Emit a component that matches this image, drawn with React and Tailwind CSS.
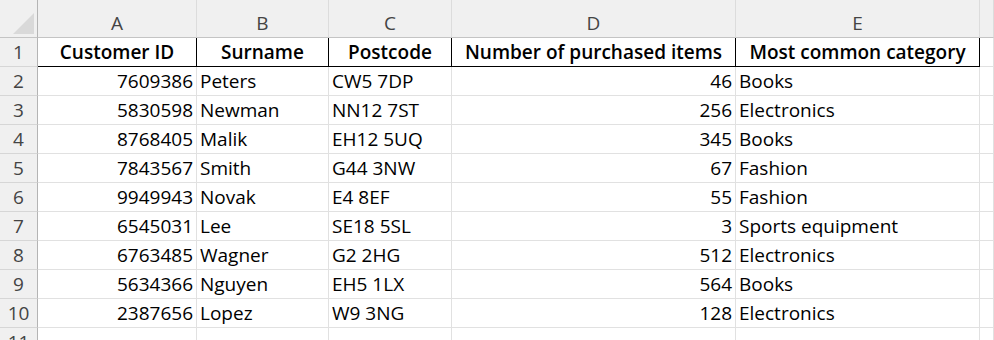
import React from "react";

const rows = [
  ["7609386", "Peters", "CW5 7DP", "46", "Books"],
  ["5830598", "Newman", "NN12 7ST", "256", "Electronics"],
  ["8768405", "Malik", "EH12 5UQ", "345", "Books"],
  ["7843567", "Smith", "G44 3NW", "67", "Fashion"],
  ["9949943", "Novak", "E4 8EF", "55", "Fashion"],
  ["6545031", "Lee", "SE18 5SL", "3", "Sports equipment"],
  ["6763485", "Wagner", "G2 2HG", "512", "Electronics"],
  ["5634366", "Nguyen", "EH5 1LX", "564", "Books"],
  ["2387656", "Lopez", "W9 3NG", "128", "Electronics"],
];

const headers = ["Customer ID", "Surname", "Postcode", "Number of purchased items", "Most common category"];
const letters = ["A", "B", "C", "D", "E", ""];

function RowHead({ n }) {
  return (
    <div className="bg-[#f0f0f0] border-r border-b border-r-[#b4b4b4] border-b-[#d6d6d6] text-[#444444] text-center leading-[28px] overflow-hidden">
      {n}
    </div>
  );
}

export default function App() {
  return (
    <div className="w-[994px] h-[340px] overflow-hidden bg-white font-['Open_Sans',sans-serif] text-[19px] text-black">
      <div className="grid grid-cols-[38px_159px_132px_123px_284px_244px_1fr] grid-rows-[38px_repeat(11,29px)]">
        {/* column header band */}
        <div className="bg-[#f0f0f0] border-r border-b border-r-[#b4b4b4] border-b-[#c4c4c4] relative">
          <svg className="absolute left-[13px] top-[13px]" width="21" height="21" viewBox="0 0 21 21">
            <polygon points="0,21 21,0 21,21" fill="#d9d9d9" />
          </svg>
        </div>
        {letters.map((l, i) => (
          <div
            key={i}
            className="bg-[#f0f0f0] border-r border-b border-r-[#dcdcdc] border-b-[#c4c4c4] text-[#444444] flex items-end justify-center leading-[28px]"
          >
            {l}
          </div>
        ))}

        {/* row 1 */}
        <RowHead n={1} />
        {headers.map((h, i) => (
          <div
            key={i}
            className="border-r border-b border-black font-semibold text-center leading-[28px] px-[3px] whitespace-nowrap overflow-hidden"
          >
            {h}
          </div>
        ))}
        <div className="border-r border-b border-r-[#e1e1e1] border-b-[#e1e1e1]" />

        {rows.map((r, ri) => (
          <React.Fragment key={ri}>
            <RowHead n={ri + 2} />
            {r.map((c, ci) => (
              <div
                key={ci}
                className={
                  "border-r border-b border-[#e1e1e1] leading-[28px] px-[3px] whitespace-nowrap overflow-visible " +
                  (ci === 0 || ci === 3 ? "text-right" : "text-left")
                }
              >
                {c}
              </div>
            ))}
            <div className="border-r border-b border-[#e1e1e1]" />
          </React.Fragment>
        ))}

        {/* row 11 */}
        <RowHead n={11} />
        {[0, 1, 2, 3, 4, 5].map((i) => (
          <div key={i} className="border-r border-b border-[#e1e1e1]" />
        ))}
      </div>
    </div>
  );
}
